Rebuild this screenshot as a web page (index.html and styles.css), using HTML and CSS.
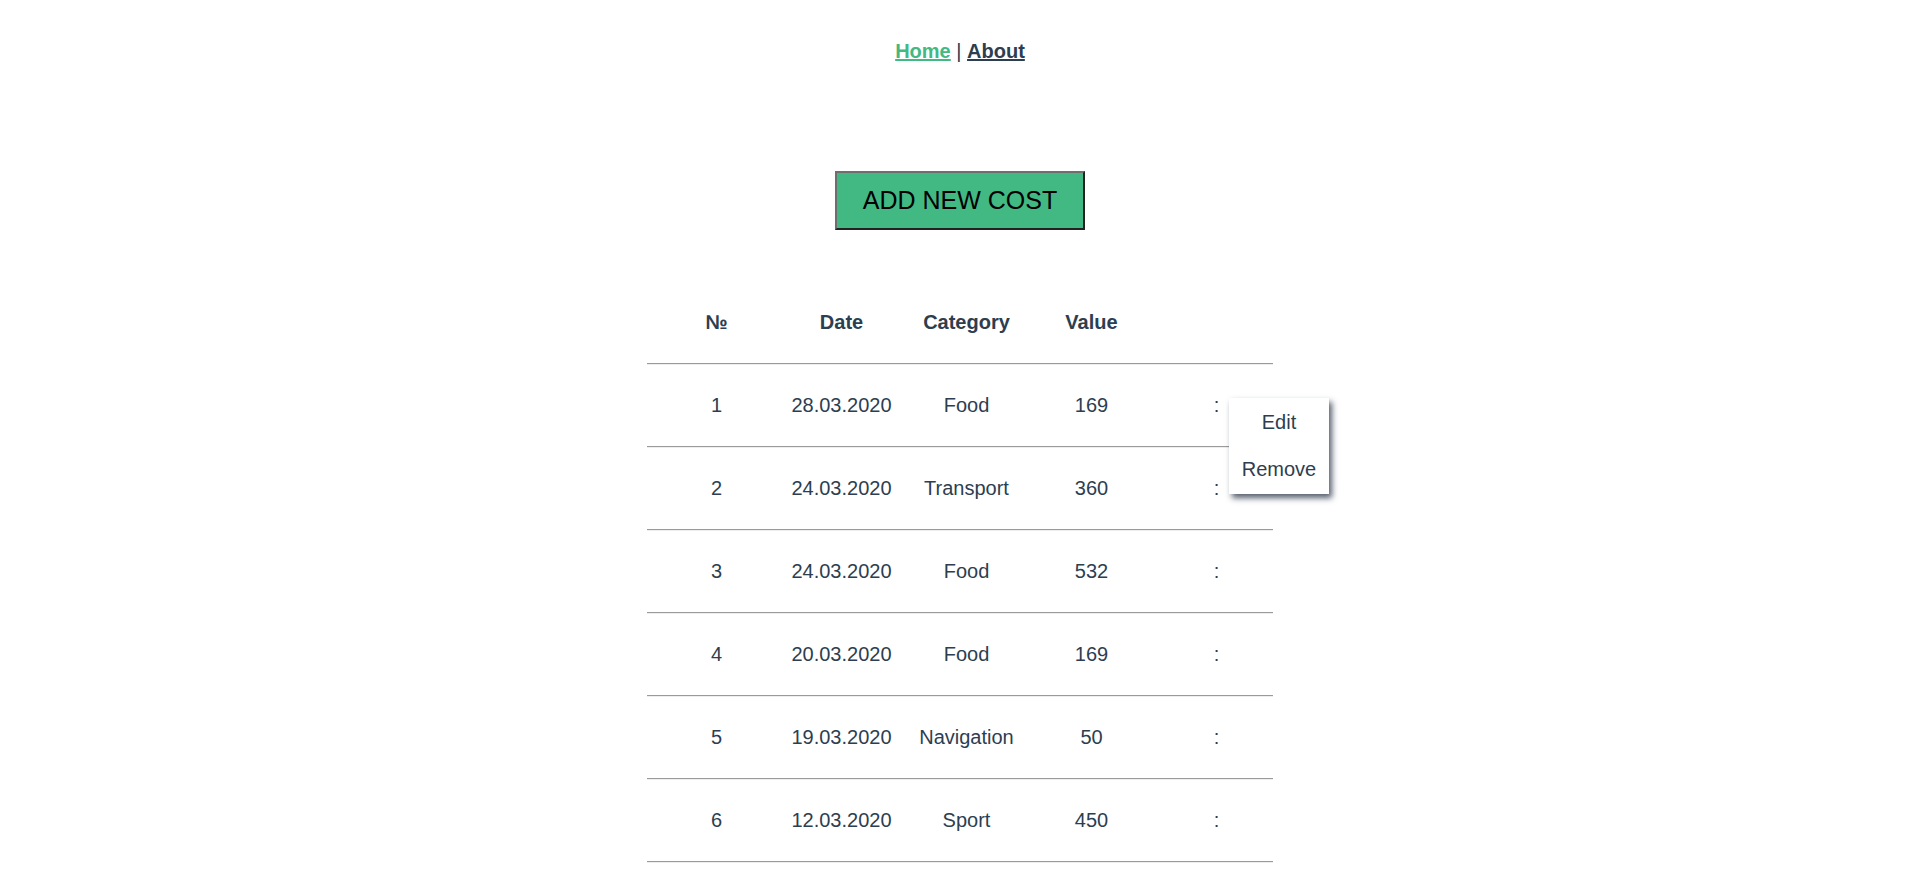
FILE: index.html
```html
<!DOCTYPE html>
<html lang="en">
<head>
<meta charset="utf-8">
<title>Costs</title>
<link rel="stylesheet" href="styles.css">
</head>
<body>
<div class="app">
  <nav class="nav">
    <a href="#" class="nav-link active">Home</a> | <a href="#" class="nav-link">About</a>
  </nav>
  <div class="actions">
    <button class="add-btn">ADD NEW COST</button>
  </div>
  <div class="table">
    <div class="row head">
      <div class="cell">№</div>
      <div class="cell">Date</div>
      <div class="cell">Category</div>
      <div class="cell">Value</div>
      <div class="cell"></div>
    </div>
    <div class="row">
      <div class="cell">1</div>
      <div class="cell">28.03.2020</div>
      <div class="cell">Food</div>
      <div class="cell">169</div>
      <div class="cell menu-cell">:
        <div class="menu">
          <div class="menu-item">Edit</div>
          <div class="menu-item">Remove</div>
        </div>
      </div>
    </div>
    <div class="row">
      <div class="cell">2</div>
      <div class="cell">24.03.2020</div>
      <div class="cell">Transport</div>
      <div class="cell">360</div>
      <div class="cell">:</div>
    </div>
    <div class="row">
      <div class="cell">3</div>
      <div class="cell">24.03.2020</div>
      <div class="cell">Food</div>
      <div class="cell">532</div>
      <div class="cell">:</div>
    </div>
    <div class="row">
      <div class="cell">4</div>
      <div class="cell">20.03.2020</div>
      <div class="cell">Food</div>
      <div class="cell">169</div>
      <div class="cell">:</div>
    </div>
    <div class="row">
      <div class="cell">5</div>
      <div class="cell">19.03.2020</div>
      <div class="cell">Navigation</div>
      <div class="cell">50</div>
      <div class="cell">:</div>
    </div>
    <div class="row">
      <div class="cell">6</div>
      <div class="cell">12.03.2020</div>
      <div class="cell">Sport</div>
      <div class="cell">450</div>
      <div class="cell">:</div>
    </div>
  </div>
</div>
</body>
</html>
```
FILE: styles.css
```css
html, body {
  margin: 0;
  padding: 0;
  background: #ffffff;
}

.app {
  padding-left: 12px;
  font-family: "Liberation Sans", Arial, Helvetica, sans-serif;
  font-size: 20px;
  color: #2c3e50;
  text-align: center;
}

.nav {
  padding-top: 40px;
  line-height: 23px;
}

.nav-link {
  font-weight: bold;
  color: #2c3e50;
  text-decoration: underline;
}

.nav-link.active {
  color: #42b983;
}

.actions {
  margin-top: 108px;
  display: flex;
  justify-content: center;
}

.add-btn {
  font-family: "Liberation Sans", Arial, Helvetica, sans-serif;
  font-size: 25px;
  line-height: normal;
  color: #000000;
  background: #42b983;
  padding: 13px 26px;
  border-width: 2px;
  border-style: solid;
  border-color: #6e6e6e #222222 #222222 #6e6e6e;
  margin: 0;
  cursor: pointer;
}

.table {
  width: 626px;
  margin: 52px auto 0;
}

.row {
  display: grid;
  grid-template-columns: repeat(5, 125px);
  padding-left: 7px;
  height: 81px;
  align-items: center;
  border-bottom: 1px solid #9a9a9a;
  box-shadow: 0 1px 0 #eeeeee;
  margin-bottom: 1px;
  line-height: 23px;
}

.row.head {
  font-weight: bold;
}

.cell {
  text-align: center;
}

.menu-cell {
  position: relative;
}

.menu {
  position: absolute;
  left: 75px;
  top: 4px;
  width: 100px;
  background: #ffffff;
  box-shadow: 3px 4px 6px rgba(30, 42, 60, 0.75);
  z-index: 2;
  padding: 1px 0;
}

.menu-item {
  padding: 12px 0;
  line-height: 23px;
  text-align: center;
}
```
